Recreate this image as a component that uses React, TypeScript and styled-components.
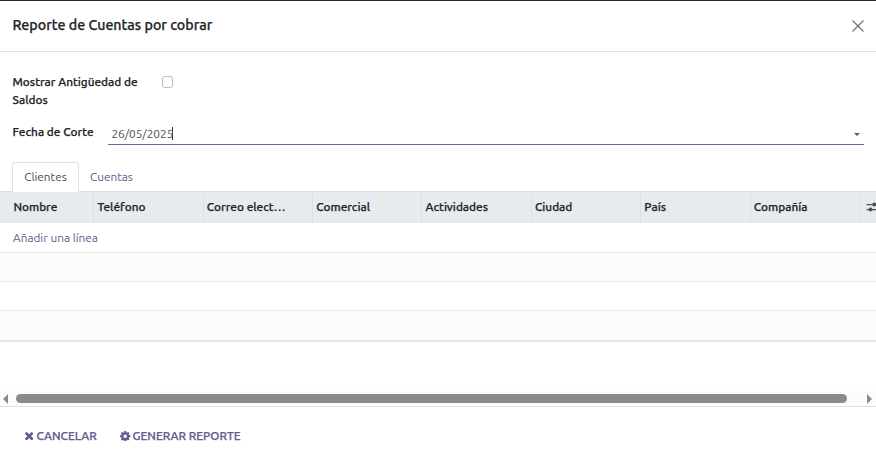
import React from "react";
import styled, { createGlobalStyle, css } from "styled-components";

const GlobalStyle = createGlobalStyle`
  * { box-sizing: border-box; }
  body {
    margin: 0;
    background: #fff;
    color: #212529;
    font: 400 11.8px/18px Ubuntu, "Noto Sans", sans-serif;
    overflow: hidden;
  }
`;

const strong = css`
  font-weight: 500;
  -webkit-text-stroke: 0.25px currentColor;
`;

const Dialog = styled.div`
  width: 876px;
  height: 463px;
  display: flex;
  flex-direction: column;
  border-top: 1px solid #2a2040;
  overflow: hidden;
`;

const Header = styled.header`
  height: 51px;
  flex: none;
  display: flex;
  align-items: center;
  justify-content: space-between;
  padding: 0 12px 0 12.4px;
  border-bottom: 1px solid #dee2e6;
`;

const Title = styled.h4`
  margin: 0 0 3px;
  font-size: 14.23px;
  line-height: 20px;
  ${strong}
`;

const CloseIcon = styled.svg`
  width: 12px;
  height: 12px;
  display: block;
`;

const Form = styled.section`
  height: 110px;
  flex: none;
  padding: 21px 12px 0 12.5px;
`;

const CheckRow = styled.div`
  display: flex;
  height: 50px;
`;

const Label = styled.label<{ $w: number }>`
  width: ${(p) => p.$w}px;
  flex: none;
  ${strong}
`;

const CheckBox = styled.span`
  width: 11px;
  height: 12px;
  margin-top: 3px;
  border: 1px solid #b9bcc0;
  border-radius: 3px;
`;

const DateRow = styled.div`
  display: flex;
`;

const DateField = styled.div`
  flex: 1;
  height: 22px;
  display: flex;
  align-items: center;
  padding: 0 4px 0 3.4px;
  border-bottom: 1px solid #71639e;
  color: #495057;
`;

const Cursor = styled.i`
  width: 1px;
  height: 13px;
  margin-left: -1px;
  background: #343a40;
`;

const Caret = styled.i`
  margin: 1px 0 0 auto;
  border: 3px solid transparent;
  border-top-color: #5f5190;
  border-bottom: 0;
`;

const Tabs = styled.nav`
  height: 30px;
  flex: none;
  display: flex;
  padding-left: 12px;
  border-bottom: 1px solid #d8dde2;
`;

const Tab = styled.button<{ $active?: boolean }>`
  height: 30px;
  width: ${(p) => (p.$active ? 67 : 65)}px;
  padding: 0 0 2px;
  font: inherit;
  color: ${(p) => (p.$active ? "#495057" : "#66598f")};
  background: ${(p) => (p.$active ? "#fff" : "transparent")};
  border: 1px solid ${(p) => (p.$active ? "#dee2e6" : "transparent")};
  border-bottom: 0;
  border-radius: 3px 3px 0 0;
`;

const TableHead = styled.div`
  height: 31px;
  flex: none;
  display: grid;
  grid-template-columns: 94.2px repeat(7, 109.4px) 1fr;
  background: #e7ebee;
  ${strong}
`;

const HeadCell = styled.div<{ $first?: boolean }>`
  padding: 6px 0 0 ${(p) => (p.$first ? 13.4 : 3.2)}px;
  margin-bottom: 1px;
  border-right: 1px solid #dbe0e5;
  white-space: nowrap;
`;

const OptionCell = styled.div`
  padding: 8px 0 0 4px;
  overflow: hidden;
  svg { display: block; }
`;

const Row = styled.div<{ $striped?: boolean; $h?: number; $last?: boolean }>`
  height: ${(p) => p.$h ?? 29}px;
  flex: none;
  padding: 6px 13px 0;
  background: ${(p) => (p.$striped ? "#fcfcfc" : "#fff")};
  border-bottom: ${(p) => (p.$last ? 2 : 1)}px solid #e7e9ed;
  color: #66598f;
`;

const ScrollBar = styled.div`
  height: 15px;
  flex: none;
  margin-top: 49px;
  padding: 0 4px 0 3px;
  display: flex;
  align-items: center;
  background: #fcfcfc;
`;

const Thumb = styled.div`
  width: 831px;
  height: 9px;
  margin: 0 20px 0 8px;
  border-radius: 5px;
  background: #8b8b8b;
`;

const Arrow = styled.i<{ $right?: boolean }>`
  border: solid transparent;
  border-width: ${(p) => (p.$right ? "5px 0 5px 5px" : "5px 5px 5px 0")};
  border-left-color: ${(p) => (p.$right ? "#8b8b8b" : "transparent")};
  border-right-color: ${(p) => (p.$right ? "transparent" : "#8b8b8b")};
`;

const Footer = styled.footer`
  flex: 1;
  display: flex;
  align-items: flex-start;
  gap: 23.4px;
  padding: 20px 25px 0;
  border-top: 1px solid #dee2e6;
`;

const Action = styled.button<{ $gap: number }>`
  display: flex;
  align-items: center;
  gap: ${(p) => p.$gap}px;
  padding: 0;
  border: 0;
  background: none;
  color: #66598f;
  font: inherit;
  ${strong}
`;

const columns = ["Nombre", "Teléfono", "Correo elect…", "Comercial", "Actividades", "Ciudad", "País", "Compañía"];

const TimesIcon = () => (
  <svg width="8.4" height="8.4" viewBox="302 366 1188 1188" fill="currentColor">
    <path d="M1490 1322q0 40-28 68l-136 136q-28 28-68 28t-68-28l-294-294-294 294q-28 28-68 28t-68-28l-136-136q-28-28-28-68t28-68l294-294-294-294q-28-28-28-68t28-68l136-136q28-28 68-28t68 28l294 294 294-294q28-28 68-28t68 28l136 136q28 28 28 68t-28 68l-294 294 294 294q28 28 28 68z" />
  </svg>
);

const CogIcon = () => (
  <svg width="10.4" height="10.4" viewBox="128 128 1536 1536" fill="currentColor">
    <path d="M1152 896q0-106-75-181t-181-75-181 75-75 181 75 181 181 75 181-75 75-181zm512-109v222q0 12-8 23t-20 13l-185 28q-19 54-39 91 35 50 107 138 10 12 10 25t-9 23q-27 37-99 108t-94 71q-12 0-26-9l-138-108q-44 23-91 38-16 136-29 186-7 28-36 28h-222q-14 0-24.5-8.5t-11.5-21.5l-28-184q-49-16-90-37l-141 107q-10 9-25 9-14 0-25-11-126-114-165-168-7-10-7-23 0-12 8-23 15-21 51-66.5t54-70.5q-27-50-41-99l-183-27q-13-2-21-12.5t-8-23.5v-222q0-12 8-23t19-13l186-28q14-46 39-92-40-57-107-138-10-12-10-24 0-10 9-23 26-36 98.5-107.5t94.5-71.5q13 0 26 10l138 107q44-23 91-38 16-136 29-186 7-28 36-28h222q14 0 24.5 8.5t11.5 21.5l28 184q49 16 90 37l142-107q9-9 24-9 13 0 25 10 129 119 165 170 7 8 7 22 0 12-8 23-15 21-51 66.5t-54 70.5q26 50 41 98l183 28q13 2 21 12.5t8 23.5z" />
  </svg>
);

export default function App() {
  return (
    <>
      <GlobalStyle />
      <Dialog>
        <Header>
          <Title>Reporte de Cuentas por cobrar</Title>
          <CloseIcon viewBox="0 0 12 12">
            <path d="M.5.5l11 11M11.5.5l-11 11" stroke="#777" strokeWidth="1.4" />
          </CloseIcon>
        </Header>
        <Form>
          <CheckRow>
            <Label $w={149.5}>Mostrar Antigüedad de<br />Saldos</Label>
            <CheckBox />
          </CheckRow>
          <DateRow>
            <Label $w={95.5}>Fecha de Corte</Label>
            <DateField>
              26/05/2025<Cursor /><Caret />
            </DateField>
          </DateRow>
        </Form>
        <Tabs>
          <Tab $active>Clientes</Tab>
          <Tab>Cuentas</Tab>
        </Tabs>
        <TableHead>
          {columns.map((name, i) => (
            <HeadCell key={name} $first={i === 0}>{name}</HeadCell>
          ))}
          <OptionCell>
            <svg width="14" height="14" viewBox="0 0 14 14" fill="#495057">
              <path d="M2.5 4.1h12v1.1h-12zM2.5 9.1h12v1.1h-12z" />
              <circle cx="10.3" cy="4.6" r="2" />
              <circle cx="6.5" cy="9.6" r="2" />
            </svg>
          </OptionCell>
        </TableHead>
        <Row $h={30}>Añadir una línea</Row>
        <Row $striped />
        <Row />
        <Row $striped $last $h={31} />
        <ScrollBar><Arrow /><Thumb /><Arrow $right /></ScrollBar>
        <Footer>
          <Action $gap={3}><TimesIcon />CANCELAR</Action>
          <Action $gap={2}><CogIcon />GENERAR REPORTE</Action>
        </Footer>
      </Dialog>
    </>
  );
}
